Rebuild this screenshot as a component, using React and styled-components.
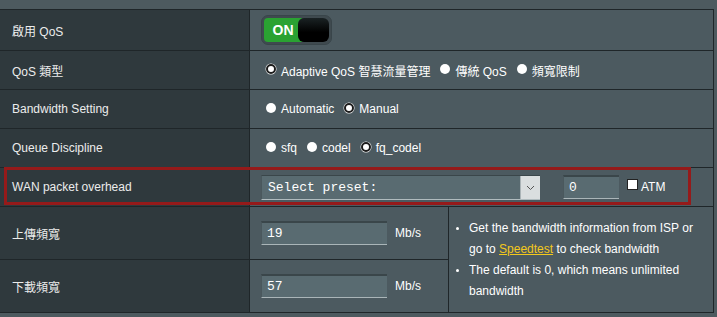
import styled, { createGlobalStyle } from "styled-components"

const GlobalStyle = createGlobalStyle`
  html, body {
    margin: 0;
    padding: 0;
    background: #4d5a5f;
    font-family: "Liberation Sans", Arial, "Noto Sans CJK TC", sans-serif;
    font-size: 12px;
    color: #fff;
  }
`

const Page = styled.div`
  position: relative;
  padding-top: 9px;
  width: 717px;
  height: 317px;
  overflow: hidden;
`

const Table = styled.div`
  display: grid;
  grid-template-columns: 249px 198px 264px;
  grid-template-rows: 40px 38px 38px 38px 38px 52px 52px;
  gap: 1px;
  margin-left: -1px;
  width: 713px;
  background: #1f2629;
  border: 1px solid #1f2629;
`

const Label = styled.div`
  display: flex;
  align-items: center;
  padding-left: 12px;
  background: #2f393d;
  color: #ececec;
`

const Value = styled.div`
  display: flex;
  align-items: center;
  padding-left: 11px;
  background: #4c5a60;
  grid-column: ${(p) => (p.$wide ? "span 2" : "auto")};
`

const Notes = styled.ul`
  grid-column: 3;
  grid-row: 6 / span 2;
  margin: 0;
  padding: 0 16px 0 20px;
  background: #4c5a60;
  display: flex;
  flex-direction: column;
  justify-content: center;
  line-height: 21px;
  list-style: disc;
  font-size: 12px;
  li::marker {
    font-size: 10px;
  }
`

const Link = styled.span`
  color: #f3c81c;
  text-decoration: underline;
`

const Toggle = styled.div`
  display: flex;
  width: 71px;
  height: 30px;
  box-sizing: border-box;
  padding: 2px;
  border-radius: 7px;
  background: #3f4a4f;
  border: 1px solid #39454a;
`

const ToggleOn = styled.div`
  width: 38px;
  display: flex;
  align-items: center;
  justify-content: center;
  background: #2aa232;
  border-radius: 4px 0 0 4px;
  font-weight: bold;
  font-size: 14px;
  margin-right: -4px;
`

const Knob = styled.div`
  flex: 1;
  border-radius: 6px;
  background: linear-gradient(#1a2224, #000 60%);
`

const Options = styled.div`
  display: flex;
  align-items: center;
  gap: 10px;
  padding-left: 5px;
`

const Option = styled.label`
  display: flex;
  align-items: center;
  gap: 5px;
  white-space: nowrap;
`

const Radio = styled.span`
  width: 10px;
  height: 10px;
  border-radius: 50%;
  background: #fff;
  box-sizing: border-box;
  border: ${(p) => (p.$checked ? "2.5px solid #1c1c1c" : "none")};
  box-shadow: ${(p) => (p.$checked ? "0 0 0 0.5px #fff" : "none")};
  margin-top: -2px;
`

const SelectBox = styled.div`
  display: flex;
  width: 279px;
  height: 25px;
  box-sizing: border-box;
  background: #596b71;
  border-top: 1px solid #3a464a;
  border-left: 1px solid #4a585d;
  border-bottom: 1px solid #b0bbbe;
  font-family: "Liberation Mono", "Courier New", monospace;
  font-size: 13px;
  margin-top: 1px;
`

const SelectText = styled.div`
  flex: 1;
  display: flex;
  align-items: center;
  padding-left: 6px;
`

const SelectArrow = styled.div`
  width: 19px;
  display: flex;
  align-items: center;
  justify-content: center;
  background: #dadedf;
  border-left: 1px solid #aab3b6;
`

const TextInput = styled.div`
  width: ${(p) => p.$w}px;
  height: 24px;
  box-sizing: border-box;
  display: flex;
  align-items: center;
  padding-left: 5px;
  background: #596b71;
  border-top: 2px solid #3a464a;
  border-left: 1px solid #4a585d;
  border-bottom: 1px solid #aab5b8;
  font-family: "Liberation Mono", "Courier New", monospace;
  font-size: 13px;
  margin-left: ${(p) => p.$ml || 0}px;
`

const Check = styled.span`
  width: 11px;
  height: 11px;
  background: #fff;
  border: 1px solid #222;
  box-sizing: border-box;
  margin: -5px 3px 0 8px;
`

const Unit = styled.span`
  margin-left: 8px;
`

const Annotation = styled.div`
  position: absolute;
  left: 4px;
  top: 167px;
  width: 687px;
  height: 38px;
  box-sizing: border-box;
  border: 3px solid #951a1a;
  pointer-events: none;
`

function RadioGroup({ items, checked }) {
  return (
    <Options>
      {items.map((t) => (
        <Option key={t}>
          <Radio $checked={t === checked} />
          {t}
        </Option>
      ))}
    </Options>
  )
}

export default function App() {
  return (
    <Page>
      <GlobalStyle />
      <Table>
        <Label>啟用 QoS</Label>
        <Value $wide>
          <Toggle>
            <ToggleOn>ON</ToggleOn>
            <Knob />
          </Toggle>
        </Value>

        <Label>QoS 類型</Label>
        <Value $wide>
          <RadioGroup
            items={["Adaptive QoS 智慧流量管理", "傳統 QoS", "頻寬限制"]}
            checked="Adaptive QoS 智慧流量管理"
          />
        </Value>

        <Label>Bandwidth Setting</Label>
        <Value $wide>
          <RadioGroup items={["Automatic", "Manual"]} checked="Manual" />
        </Value>

        <Label>Queue Discipline</Label>
        <Value $wide>
          <RadioGroup items={["sfq", "codel", "fq_codel"]} checked="fq_codel" />
        </Value>

        <Label>WAN packet overhead</Label>
        <Value $wide>
          <SelectBox>
            <SelectText>Select preset:</SelectText>
            <SelectArrow>
              <svg width="9" height="6" viewBox="0 0 9 6">
                <path d="M1 1 L4.5 4.5 L8 1" fill="none" stroke="#555" strokeWidth="1" />
              </svg>
            </SelectArrow>
          </SelectBox>
          <TextInput $w={56} $ml={23}>0</TextInput>
          <Check />
          ATM
        </Value>

        <Label>上傳頻寬</Label>
        <Value>
          <TextInput $w={126}>19</TextInput>
          <Unit>Mb/s</Unit>
        </Value>
        <Notes>
          <li>Get the bandwidth information from ISP or go to <Link>Speedtest</Link> to check bandwidth</li>
          <li>The default is 0, which means unlimited bandwidth</li>
        </Notes>

        <Label>下載頻寬</Label>
        <Value>
          <TextInput $w={126}>57</TextInput>
          <Unit>Mb/s</Unit>
        </Value>
      </Table>
      <Annotation />
    </Page>
  )
}
